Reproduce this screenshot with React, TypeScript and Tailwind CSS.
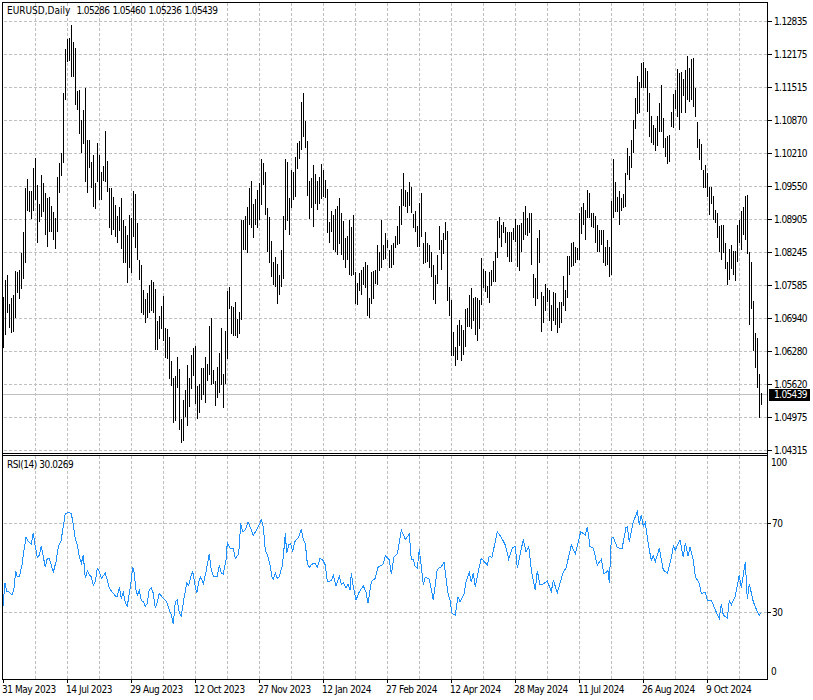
const BARS = "3 297 348,5 280 335,7 275 313,9 304 328,11 298 333,13 295 332,15 271 318,17 272 293,19 270 299,21 253 289,23 232 279,25 188 263,27 179 211,29 191 212,31 191 219,33 168 211,35 158 200,37 185 243,39 204 222,41 175 217,43 183 212,45 193 235,47 198 247,49 197 232,51 206 232,53 212 240,55 218 249,57 177 232,59 163 193,61 153 176,63 93 163,65 49 100,67 39 62,69 38 61,71 25 77,73 42 77,75 48 105,77 91 110,79 90 134,81 120 153,83 110 144,85 88 182,87 140 193,89 140 168,91 162 188,93 155 207,95 183 209,97 143 182,99 155 200,101 172 200,103 166 181,105 131 182,107 161 192,109 188 228,111 188 235,113 197 230,115 205 237,117 216 243,119 207 231,121 198 249,123 220 263,125 226 263,127 235 283,129 215 268,131 218 273,133 191 237,135 194 248,137 223 260,139 260 280,141 265 313,143 290 315,145 299 323,147 293 318,149 285 313,151 280 311,153 282 313,155 289 350,157 321 350,159 316 339,161 306 329,163 296 341,165 328 358,167 329 359,169 337 379,171 361 386,173 378 423,175 376 421,177 357 388,179 369 430,181 419 443,183 400 441,185 390 417,187 365 426,189 378 407,191 355 389,193 348 376,195 346 404,197 386 419,199 384 413,201 368 400,203 368 395,205 357 403,207 364 381,209 326 375,211 318 385,213 370 384,215 381 406,217 367 398,219 353 393,221 328 385,223 374 408,225 331 384,227 291 359,229 287 309,231 306 334,233 307 336,235 302 336,237 319 338,239 312 334,241 220 320,243 220 250,245 216 250,247 207 253,249 188 225,251 181 228,253 204 238,255 199 225,257 190 228,259 183 220,261 159 205,263 163 185,265 172 215,267 208 252,269 217 263,271 241 277,273 262 285,275 257 287,277 264 304,279 275 295,281 250 287,283 216 279,285 159 230,287 162 221,289 198 235,291 170 208,293 172 200,295 157 197,297 143 169,299 141 159,301 102 150,303 93 137,305 121 148,307 141 196,309 181 219,311 178 208,313 165 227,315 174 204,317 181 210,319 177 204,321 164 199,323 170 197,325 180 198,327 189 233,329 222 243,331 211 232,333 215 250,335 209 252,337 206 255,339 198 244,341 213 255,343 221 260,345 238 268,347 236 260,349 220 275,351 227 276,353 215 275,355 272 304,357 283 305,359 273 291,361 270 295,363 267 285,365 262 288,367 265 316,369 298 318,371 272 304,373 271 299,375 270 284,377 245 285,379 252 271,381 220 268,383 245 260,385 233 259,387 240 248,389 250 268,391 245 268,393 243 265,395 236 248,397 226 245,399 206 244,401 189 225,403 173 206,405 190 207,407 192 213,409 182 206,411 187 213,413 214 228,415 211 232,417 226 247,419 203 247,421 193 237,423 243 264,425 232 263,427 243 262,429 245 268,431 252 277,433 265 300,435 275 304,437 255 284,439 226 250,441 240 270,443 233 254,445 222 240,447 231 301,449 287 316,451 300 356,453 332 356,455 347 366,457 325 360,459 320 346,461 325 361,463 330 355,465 309 347,467 308 327,469 295 327,471 288 329,473 298 321,475 297 335,477 298 341,479 300 329,481 258 305,483 269 288,485 271 292,487 286 298,489 272 303,491 270 286,493 261 282,495 252 282,497 221 258,499 217 238,501 225 247,503 222 233,505 227 243,507 232 257,509 232 262,511 232 262,513 228 240,515 219 242,517 225 267,519 225 271,521 223 252,523 212 240,525 206 235,527 218 236,529 213 233,531 213 265,533 274 298,535 278 306,537 238 299,539 230 263,541 292 332,543 296 323,545 284 311,547 288 302,549 290 321,551 305 331,553 292 321,555 293 325,557 308 333,559 302 328,561 302 323,563 276 306,565 290 311,567 256 298,569 256 275,571 243 267,573 242 266,575 247 263,577 248 260,579 213 260,581 207 234,583 203 225,585 210 240,587 190 218,589 193 218,591 213 227,593 213 228,595 216 243,597 225 252,599 230 252,601 230 245,603 230 263,605 247 266,607 240 265,609 247 277,611 201 275,613 159 218,615 182 212,617 197 212,619 191 225,621 198 211,623 194 208,625 173 207,627 148 175,629 156 180,631 140 168,633 120 153,635 98 129,637 76 114,639 82 113,641 63 88,643 62 88,645 68 88,647 71 112,649 93 137,651 116 143,653 125 145,655 128 151,657 116 146,659 103 132,661 85 132,663 118 148,665 138 157,667 136 164,669 135 162,671 112 127,673 94 128,675 90 109,677 69 117,679 73 130,681 72 113,683 79 96,685 70 113,687 56 100,689 68 102,691 59 100,693 58 107,695 88 117,697 122 148,699 139 160,701 144 170,703 170 188,705 165 188,707 173 197,709 187 215,711 187 204,713 196 220,715 210 223,717 213 238,719 226 252,721 225 260,723 225 253,725 243 269,727 262 285,729 249 280,731 245 269,733 251 275,735 251 281,737 225 262,739 220 243,741 211 250,743 207 235,745 196 240,747 195 254,749 252 325,751 262 309,753 301 351,755 333 368,757 338 388,759 374 418,761 393 405";

const barPath = BARS.split(",").map((s) => {
  const [x, t, b] = s.split(" ").map(Number);
  return `M${x + 0.5} ${t}V${b}`;
}).join("");

const R1 = [9,467,15,400,21,425,27,425,36,436,42,415,47,362,52,380,58,380,66,345,72,300,78,262,84,272,90,280,94,283,100,248,105,285,112,322,118,315,124,287,130,320,136,352,142,325,148,325,154,345,160,367,168,335,175,290,183,272,190,230,196,190,208,188,214,190,220,225,226,268,232,285,238,320,244,340,250,316,256,385,262,362,268,375,274,380,280,405,286,395,292,355,298,365,304,385,316,370,322,390,328,415,340,430,346,438,352,438,358,412,364,445,370,428,376,458,382,468,392,405,398,350,402,365,408,420,412,435,418,422,424,452,430,455,436,468,442,460,448,418,454,414,460,430,466,475,472,455,478,430,490,445,500,455,508,480,514,495,520,523,526,455,532,450,538,490,544,497,552,445,560,400,566,405,572,380,578,365,584,400,590,430,596,395,602,380,610,402,618,365,628,312,634,360,640,378,652,378,658,345,664,370,670,372,678,330,682,278,690,295,700,295,706,325,716,312,722,220,728,245,736,240,744,215,750,230,760,256,770,240,784,210,790,230,796,300,804,320,810,345];
const R2 = [6,380,10,388,16,368,22,385,28,380,36,350,40,320,46,250,50,310,56,285,62,280,68,305,74,275,86,262,94,236,100,270,106,280,112,340,118,353,124,343,136,340,142,352,150,325,158,330,166,345,172,395,184,392,190,375,198,408,208,378,214,403,220,398,228,415,234,403,240,420,244,370,250,410,258,450,268,425,280,408,288,425,294,460,304,395,316,385,324,352,340,342,346,318,358,330,364,372,372,322,382,312,394,240,406,268,418,252,424,330,430,328,436,350,442,355,448,298,454,350,460,405,466,382,478,388,490,450,502,358,514,350,522,337,534,430,540,450,546,490,556,495,564,440,570,455,582,432,588,395,598,368,604,395,610,370,616,410,624,368,634,325,652,345,658,318,666,322,682,245,694,262,706,285,716,328,728,292,736,290,742,355,760,268,768,305,776,290,784,360,796,420,802,362,810,405];
const R3 = [10,402,22,392,34,425,40,390,52,428,70,365,78,355,94,285,106,312,122,245,136,255,142,230,150,290,160,295,172,345,184,328,192,372,204,362,208,398,214,265,220,262,232,292,246,297,258,232,262,230,268,275,280,215,292,185,298,225,304,195,310,228,316,218,326,290,334,330,340,318,346,335,358,295,370,360,382,370,394,325,400,288,406,300,420,270,430,322,436,278,444,318,450,292,460,330,466,380,478,400,484,430,496,428,502,450,514,450,530,490,538,505,544,463,550,495,562,505,568,450,574,465,586,438,598,375,604,415,616,335,622,448,628,402,640,455,652,485,658,495,662,490];

function pts(a: number[], ox: number) {
  const out: string[] = [];
  for (let i = 0; i < a.length; i += 2) {
    out.push(`${(ox + a[i] / 3).toFixed(1)},${(450 + a[i + 1] / 3).toFixed(1)}`);
  }
  return out.join(" ");
}
const rsiPoints = [pts(R1, 0), pts(R2, 270), pts(R3, 540)].join(" ");

const vGrid: number[] = [];
for (let x = 35; x <= 739; x += 32) vGrid.push(x);
const hGrid: number[] = [];
for (let y = 21; y <= 450; y += 33) hGrid.push(y);

const PRICES = ["1.12835","1.12175","1.11515","1.10870","1.10210","1.09550","1.08905","1.08245","1.07585","1.06940","1.06280","1.05620","1.04975","1.04315"];
const DATES = ["31 May 2023","14 Jul 2023","29 Aug 2023","12 Oct 2023","27 Nov 2023","12 Jan 2024","27 Feb 2024","12 Apr 2024","28 May 2024","11 Jul 2024","26 Aug 2024","9 Oct 2024"];

function GridLines({ ys, top, bottom }: { ys: number[]; top: number; bottom: number }) {
  return (
    <g stroke="#c0c0c0" strokeWidth={1} strokeDasharray="3 2" fill="none">
      {ys.map((y) => (
        <path key={y} d={`M4 ${y + 0.5}H767`} />
      ))}
      {vGrid.map((x) => (
        <path key={x} d={`M${x + 0.5} ${top}V${bottom}`} />
      ))}
    </g>
  );
}

export default function App() {
  return (
    <div className="relative w-[813px] h-[700px] bg-white pt-[2px] pl-[2px] overflow-hidden font-['DejaVu_Sans_Condensed','DejaVu_Sans',sans-serif] text-[10px] tracking-[-0.45px] text-black">
      {/* price pane */}
      <div className="flex h-[452px]">
        <div className="relative w-[766px] h-full border border-black">
          <svg className="block" width={764} height={450} viewBox="3 3 764 450" shapeRendering="crispEdges">
            <GridLines ys={hGrid} top={3} bottom={453} />
            <path d="M3 394.5H767" stroke="#c0c0c0" strokeWidth={1} fill="none" />
            <path d={barPath} stroke="#000" strokeWidth={1} fill="none" />
          </svg>
          <div className="absolute left-[4px] top-[1px] flex gap-[6px] whitespace-pre leading-[14px]">
            <span className="tracking-[0px]">EURUSD,Daily</span>
            <span className="flex gap-[3px] tracking-[-0.6px]"><span>1.05286</span><span>1.05460</span><span>1.05236</span><span>1.05439</span></span>
          </div>
        </div>
        <div className="relative flex-1 flex flex-col pt-[3px] tracking-[-0.6px]">
          {PRICES.map((p) => (
            <div key={p} className="flex items-center h-[33px] shrink-0">
              <div className="w-[4px] h-px bg-black" />
              <span className="ml-[2px]">{p}</span>
            </div>
          ))}
          <div className="absolute left-[1px] top-[387px] w-[41px] h-[12px] bg-black text-white leading-[12px] pl-[5px]">1.05439</div>
        </div>
      </div>
      {/* spacer between panes */}
      <div className="w-[766px] h-px border-x border-black" />
      {/* RSI pane */}
      <div className="flex h-[225px]">
        <div className="relative w-[766px] h-full border border-black">
          <svg className="block" width={764} height={223} viewBox="3 456 764 223" shapeRendering="crispEdges">
            <GridLines ys={[523, 612]} top={456} bottom={679} />
            <polyline points={rsiPoints} stroke="#1e90ff" strokeWidth={1} fill="none" />
          </svg>
          <div className="absolute left-[4px] top-[2px] leading-[14px]">RSI(14) 30.0269</div>
        </div>
        <div className="flex-1 flex flex-col pl-[3px] pt-[1px]">
          <div className="h-[14px] leading-[14px]">100</div>
          <div className="mt-[46px] h-[14px] flex items-center -ml-[3px]">
            <div className="w-[3px] h-px bg-black" />
            <span className="ml-[1px]">70</span>
          </div>
          <div className="mt-[75px] h-[14px] flex items-center -ml-[3px]">
            <div className="w-[3px] h-px bg-black" />
            <span className="ml-[1px]">30</span>
          </div>
          <div className="mt-[46px] h-[14px] leading-[14px]">0</div>
        </div>
      </div>
      {/* time axis */}
      <div className="flex pl-px">
        {DATES.map((d) => (
          <div key={d} className="w-[64px] shrink-0">
            <div className="w-px h-[3px] bg-black" />
            <div className="-ml-px whitespace-nowrap leading-[13px]">{d}</div>
          </div>
        ))}
      </div>
    </div>
  );
}
